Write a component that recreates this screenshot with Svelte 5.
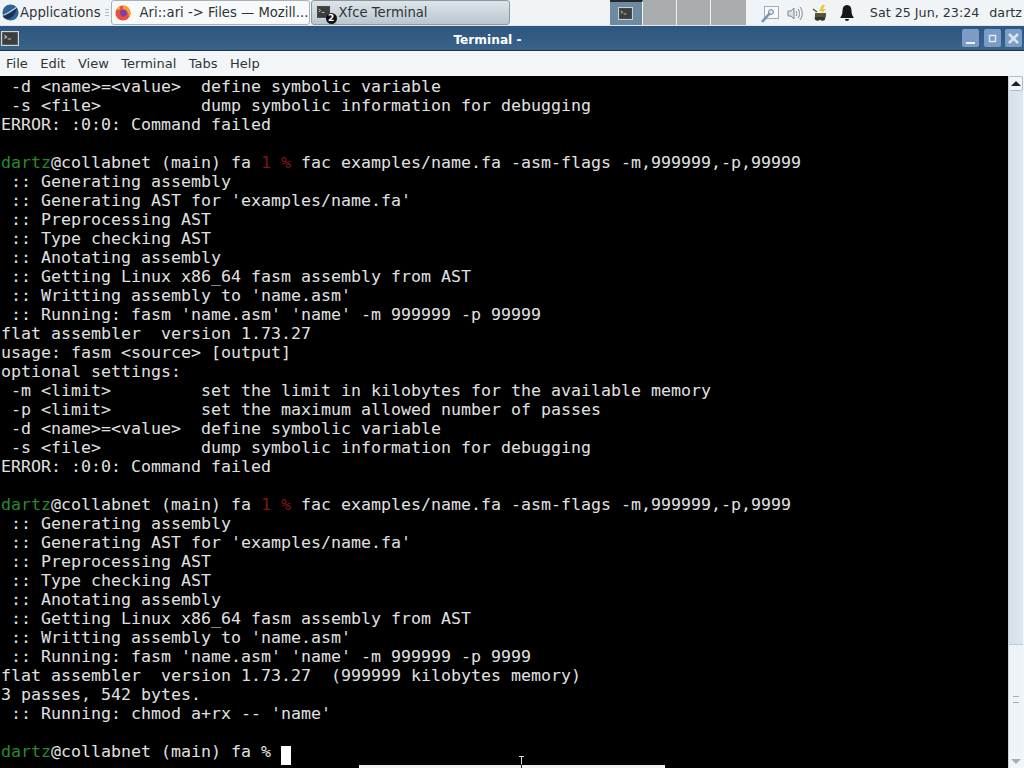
<script>
	const lines = [
		' -d <name>=<value>  define symbolic variable',
		' -s <file>          dump symbolic information for debugging',
		'ERROR: :0:0: Command failed',
		'',
		{ cmd: 'fac examples/name.fa -asm-flags -m,999999,-p,99999', code: '1' },
		' :: Generating assembly',
		" :: Generating AST for 'examples/name.fa'",
		' :: Preprocessing AST',
		' :: Type checking AST',
		' :: Anotating assembly',
		' :: Getting Linux x86_64 fasm assembly from AST',
		" :: Writting assembly to 'name.asm'",
		" :: Running: fasm 'name.asm' 'name' -m 999999 -p 99999",
		'flat assembler  version 1.73.27',
		'usage: fasm <source> [output]',
		'optional settings:',
		' -m <limit>         set the limit in kilobytes for the available memory',
		' -p <limit>         set the maximum allowed number of passes',
		' -d <name>=<value>  define symbolic variable',
		' -s <file>          dump symbolic information for debugging',
		'ERROR: :0:0: Command failed',
		'',
		{ cmd: 'fac examples/name.fa -asm-flags -m,999999,-p,9999', code: '1' },
		' :: Generating assembly',
		" :: Generating AST for 'examples/name.fa'",
		' :: Preprocessing AST',
		' :: Type checking AST',
		' :: Anotating assembly',
		' :: Getting Linux x86_64 fasm assembly from AST',
		" :: Writting assembly to 'name.asm'",
		" :: Running: fasm 'name.asm' 'name' -m 999999 -p 9999",
		'flat assembler  version 1.73.27  (999999 kilobytes memory)',
		'3 passes, 542 bytes.',
		" :: Running: chmod a+rx -- 'name'",
		'',
		{ cmd: '', code: '' }
	];

	const menus = ['File', 'Edit', 'View', 'Terminal', 'Tabs', 'Help'];
</script>

{#snippet termIcon(w, h)}
	<svg class="term-icon" width={w} height={h} viewBox="0 0 16 14" preserveAspectRatio="none">
		<rect x="0.5" y="0.5" width="15" height="13" fill="#4a4f4d" stroke="#d3d6d4" />
		<rect x="2" y="2" width="12" height="10" fill="#3a3e3c" />
		<path d="M3 4l2 1.5-2 1.5M6 7.5h3" stroke="#c4c8c4" fill="none" />
	</svg>
{/snippet}

<div class="desktop">
	<header class="panel">
		<div class="apps">
			<svg width="17" height="17" viewBox="0 0 20 20">
				<circle cx="10" cy="10" r="9.5" fill="#2f6496" />
				<path d="M1 14c5-1 10-4 17-10-2 6-4 11-9 13-4 1-7 0-8-3z" fill="#173552" />
				<path d="M2 13c5-2 9-5 15-9" stroke="#e6eef5" stroke-width="1.2" fill="none" />
			</svg>
			<span>Applications</span>
		</div>
		<div class="sep"><i></i><i></i><i></i></div>
		<div class="task active">
			<svg class="fox" width="16" height="16" viewBox="0 0 18 18">
				<circle cx="9" cy="9" r="8.5" fill="#ee4f3c" />
				<path d="M9 .5a8.5 8.5 0 0 1 8.5 8.5c0 2-.8 4-2 5.2C16 9 13 5 9 5z" fill="#f9a22e" />
				<path d="M1 6c1-2 3-4 5-5-1 1-1 3 0 4-2 0-4 0-5 1z" fill="#f9c22e" />
				<circle cx="9.5" cy="9" r="3.8" fill="#7b3fb2" />
			</svg>
			<span>Ari::ari -&gt; Files — Mozill...</span>
		</div>
		<div class="task">
			<div class="task-icon">
				{@render termIcon(15, 14)}
				<b class="badge">2</b>
			</div>
			<span>Xfce Terminal</span>
		</div>
		<div class="spacer"></div>
		<div class="pager">
			<div class="desk current">{@render termIcon(15, 13)}</div>
			<div class="desk"></div>
			<div class="desk"></div>
			<div class="desk last"></div>
		</div>
		<div class="tray">
			<svg width="18" height="20" viewBox="0 0 18 20">
				<rect x="3.5" y="3.5" width="14" height="12" fill="#f6f8f9" stroke="#a4acb3" />
				<path d="M1 19l8-9" stroke="#7094bb" stroke-width="2.6" />
				<circle cx="10" cy="9" r="2.4" fill="#dfe6ec" stroke="#6d7c8a" />
			</svg>
			<svg width="16" height="18" viewBox="0 0 16 18" fill="none" stroke="#80878d">
				<path d="M1 7h3l3-3v11l-3-3H1z" fill="#dde0e3" />
				<path d="M9 7c1 1.500 1 3.500 0 5M11 5c2 2.500 2 6.500 0 9M13 3c3 4 3 9 0 13" />
			</svg>
			<svg width="18" height="18" viewBox="0 0 18 18">
				<circle cx="6.500" cy="14" r="2.800" fill="#36362e" />
				<circle cx="11.500" cy="14" r="2.800" fill="#36362e" />
				<rect x="4" y="9" width="11" height="4" fill="#58533a" />
				<path d="M11 1l-3 6h3l-1 3 5-5h-3l2-4z" fill="#e8c93a" />
				<path d="M2 5l4 3" stroke="#58533a" stroke-width="1.500" />
			</svg>
			<svg width="20" height="18" viewBox="-2 0 20 18">
				<path d="M8 1c-3 0-4.500 2-4.500 6 0 3-1 5-2 6v1h13v-1c-1-1-2-3-2-6 0-4-1.500-6-4.500-6z" fill="#15181b" />
				<path d="M6 15a2 2 0 0 0 4 0z" fill="#15181b" />
			</svg>
		</div>
		<div class="clock">Sat 25 Jun, 23:24</div>
		<div class="user">dartz</div>
	</header>

	<div class="titlebar">
		<div class="win-icon">{@render termIcon(18, 15)}</div>
		<div class="title">Terminal -</div>
		<div class="win-buttons">
			<button aria-label="minimize"><svg width="13" height="13" viewBox="0 0 13 13"><path d="M2 11h9" stroke="#eef3f8" stroke-width="2" /></svg></button>
			<button aria-label="maximize"><svg width="13" height="13" viewBox="0 0 13 13"><rect x="3.500" y="3.500" width="6" height="6" fill="none" stroke="#e4ebf3" stroke-width="1.400" /></svg></button>
			<button aria-label="close"><svg width="13" height="13" viewBox="0 0 13 13"><path d="M2 2l9 9M11 2l-9 9" stroke="#d9e4f0" stroke-width="2.600" /></svg></button>
		</div>
	</div>

	<nav class="menubar">
		{#each menus as m}
			<span>{m}</span>
		{/each}
	</nav>

	<div class="term-wrap">
		<pre class="term">{#each lines as l}<div class="line">{#if typeof l === 'string'}{l || ' '}{:else}<span class="user-name">dartz</span>@collabnet (main) fa {#if l.code}<span class="code">{l.code} %</span>{:else}%{/if} {l.cmd}{#if !l.cmd}<span class="cursor"> </span>{/if}{/if}</div>{/each}</pre>
		<div class="scrollbar">
			<div class="arrow up"></div>
			<div class="thumb"></div>
			<div class="trough">
				<div class="grip"></div>
			</div>
			<div class="arrow down"></div>
		</div>
		<div class="tooltip-strip"></div>
		<svg class="ibeam" width="7" height="12" viewBox="0 0 7 12"><path d="M1 .5h5M3.500.5v8" stroke="#ddd" fill="none" /><path d="M3.500 8.500v3.500" stroke="#333" fill="none" /></svg>
	</div>
</div>

<style>
	:global(body) {
		margin: 0;
		background: #000;
	}

	.desktop {
		width: 1024px;
		height: 768px;
		display: flex;
		flex-direction: column;
		overflow: hidden;
		font-family: 'DejaVu Sans', sans-serif;
		font-size: 13.2px;
		color: #2e3436;
	}

	.panel {
		height: 26px;
		flex: none;
		display: flex;
		align-items: center;
		background: #f1f4f6;
		border-bottom: 1px solid #dfe5ea;
		box-sizing: border-box;
	}

	.apps {
		display: flex;
		align-items: center;
		gap: 1px;
		padding-left: 2px;
		white-space: nowrap;
	}

	.sep {
		display: flex;
		flex-direction: column;
		gap: 2px;
		margin: 0 2px 0 4px;
	}

	.sep i {
		display: block;
		width: 4px;
		height: 1px;
		background: #b4bbc0;
	}

	.task {
		height: 25px;
		width: 199px;
		flex: none;
		align-self: flex-start;
		margin-left: 1px;
		box-sizing: border-box;
		display: flex;
		align-items: center;
		gap: 7px;
		padding-left: 4px;
		border: 1px solid #8e979e;
		border-radius: 3px;
		background: linear-gradient(#dde5ea, #b9c6cf);
		white-space: nowrap;
		overflow: hidden;
	}

	.task.active {
		margin-left: 0;
		background: #f8f9fa;
		padding-left: 3px;
		gap: 9px;
		border-color: #a9b1b7;
	}

	.task-icon {
		position: relative;
		width: 16px;
		height: 16px;
		display: flex;
		align-items: flex-start;
	}

	.badge {
		position: absolute;
		right: -5px;
		bottom: -3px;
		width: 11px;
		height: 11px;
		border-radius: 50%;
		background: #111;
		color: #fff;
		font-size: 9px;
		line-height: 11px;
		text-align: center;
	}

	.spacer {
		flex: 1;
	}

	.pager {
		display: flex;
		height: 25px;
		align-self: flex-start;
		margin-right: 15px;
	}

	.desk {
		width: 34px;
		flex: none;
		background: #aaadae;
		border-right: 1px solid #eef1f3;
		box-sizing: border-box;
	}

	.desk.last {
		width: 35px;
		border-right: none;
	}

	.desk.current {
		width: 33px;
		background: #6e8aa3;
		border-right: 1px solid #f2f5f7;
		border-top: 2px solid #22272b;
		display: flex;
		align-items: center;
		justify-content: center;
	}

	.tray {
		display: flex;
		align-items: center;
		gap: 8px;
	}

	.clock {
		margin-left: 13px;
		font-size: 12.7px;
		white-space: nowrap;
	}

	.user {
		margin-left: 10px;
		margin-right: 2px;
		font-size: 12.7px;
	}

	.titlebar {
		height: 25px;
		flex: none;
		display: flex;
		align-items: center;
		background: linear-gradient(#2d5680, #3a6389);
		border-bottom: 1px solid #1c3550;
		box-sizing: border-box;
	}

	.win-icon {
		margin-left: 1px;
		margin-top: 1px;
		display: flex;
	}

	.title {
		flex: 1;
		padding: 4px 6px 0 0;
		text-align: center;
		color: #fff;
		font-weight: bold;
		font-size: 12.2px;
	}

	.win-buttons {
		display: flex;
		gap: 4.5px;
		margin-right: 2px;
	}

	.win-buttons button {
		width: 17px;
		height: 18px;
		padding: 0;
		border: none;
		border-radius: 2px;
		background: #7c9cc8;
		display: flex;
		align-items: center;
		justify-content: center;
	}

	.menubar {
		height: 25px;
		flex: none;
		display: flex;
		align-items: center;
		gap: 12.5px;
		padding-left: 6px;
		background: #f3f6f8;
		font-size: 13px;
	}

	.term-wrap {
		flex: 1;
		display: flex;
		position: relative;
		min-height: 0;
		background: #000;
	}

	.term {
		flex: 1;
		margin: 0;
		padding: 1px 0 0 1px;
		overflow: hidden;
		font-family: 'DejaVu Sans Mono', monospace;
		font-size: 16.61px;
		line-height: 19px;
		color: #e0e0e0;
	}

	.line {
		height: 19px;
		white-space: pre;
	}

	.user-name {
		color: #2a8a2a;
	}

	.code {
		color: #7f1414;
	}

	.cursor {
		display: inline-block;
		width: 10px;
		height: 19px;
		vertical-align: -4px;
		margin-left: 0;
		background: #fff;
	}

	.scrollbar {
		width: 16px;
		flex: none;
		display: flex;
		flex-direction: column;
		background: #eef3f7;
		border-left: 1px solid #c9d2d9;
		border-right: 1px solid #f4f6f8;
		box-sizing: border-box;
	}

	.arrow {
		height: 15px;
		flex: none;
		background: #f2f5f7;
		position: relative;
		box-sizing: border-box;
	}

	.arrow.up {
		border: 1px solid #b4bcc3;
		border-left: none;
		border-radius: 2px;
	}

	.arrow::after {
		content: '';
		position: absolute;
		left: 2px;
		border-left: 5px solid transparent;
		border-right: 5px solid transparent;
	}

	.arrow.up::after {
		top: 4px;
		border-bottom: 5px solid #1d2226;
	}

	.arrow.down::after {
		top: 6px;
		border-top: 5px solid #a8aeb3;
	}

	.thumb {
		height: 554px;
		flex: none;
		background: linear-gradient(90deg, #d4e0ea, #dee8f0);
		border-bottom: 1px solid #c3ccd3;
		box-sizing: border-box;
	}

	.trough {
		flex: 1;
		display: flex;
		align-items: center;
		justify-content: center;
	}

	.grip {
		width: 6px;
		height: 5px;
		border-top: 1px solid #a7afb5;
		border-bottom: 1px solid #a7afb5;
	}

	.tooltip-strip {
		position: absolute;
		left: 359px;
		bottom: 0;
		width: 306px;
		height: 3px;
		background: #f3f3f3;
	}

	.ibeam {
		position: absolute;
		left: 518px;
		bottom: 0;
	}
</style>
